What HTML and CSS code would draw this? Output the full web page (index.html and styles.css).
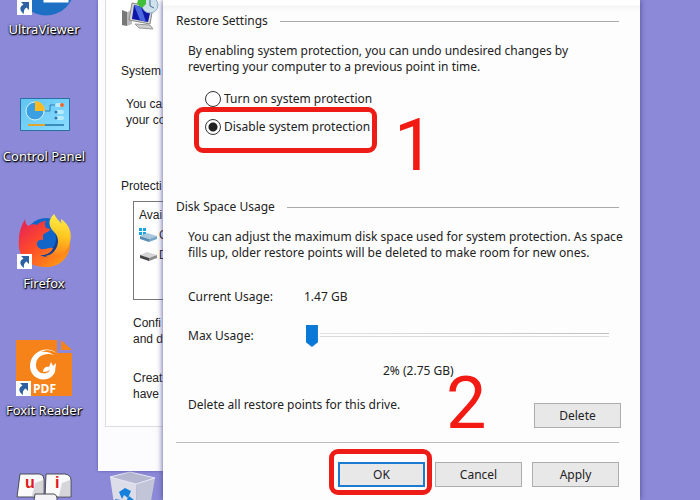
FILE: index.html
```html
<!DOCTYPE html>
<html lang="en">
<head>
<meta charset="utf-8">
<title>System Protection</title>
<link rel="stylesheet" href="styles.css">
</head>
<body>
<svg class="defs" aria-hidden="true">
  <symbol id="shortcut" viewBox="0 0 15 15">
    <path fill="#fff" d="M0 0h15v15H0z"/>
    <path fill="#2c62a4" d="M4 2h8v8l-2.500-2.500C7 9 6.500 11 7 14 2.500 11 2 7 6.500 4.500z"/>
  </symbol>
</svg>
<main class="desktop">
  <div class="shortcuts">
    <div class="shortcut">
      <svg class="glyph" viewBox="0 0 58 58">
        <circle cx="31" cy="29" r="28.500" fill="#1d6fc4"/>
        <path d="M30 30h22v13H30z" fill="none" stroke="#fff" stroke-width="3"/>
        <use href="#shortcut" x="2" y="42" width="15" height="15"/>
      </svg>
      <span>UltraViewer</span>
    </div>
    <div class="shortcut">
      <svg class="glyph" viewBox="0 0 58 58">
        <defs><linearGradient id="cp" x2="1" y2="1"><stop stop-color="#5fc4f2"/><stop offset="1" stop-color="#8bdcff"/></linearGradient></defs>
        <path fill="url(#cp)" stroke="#2a6fa0" d="M5.500 13.500h49v32h-49z"/>
        <circle cx="20" cy="26" r="9" fill="#3c9fe2" stroke="#d5f2ff"/>
        <path fill="#ffba1f" d="M20 26V16a10 10 0 0 1 10 10z"/>
        <path fill="none" stroke="#317fae" d="M30 26h5v-6h7"/>
        <g fill="#b9ebff"><rect x="40" y="18" width="9" height="4" rx="2"/><rect x="40" y="25" width="9" height="4" rx="2"/><rect x="40" y="31" width="9" height="4" rx="2"/></g>
        <circle cx="47" cy="20" r="2" fill="#e7662c"/>
        <circle cx="41" cy="27" r="1.500" fill="#2675a8"/><circle cx="41" cy="33" r="1.500" fill="#2675a8"/>
        <path stroke="#e0a52e" stroke-width="2" d="M13 40h17"/><path stroke="#3a8cba" stroke-width="2" d="M30 40h19"/>
      </svg>
      <span>Control Panel</span>
    </div>
    <div class="shortcut">
      <svg class="glyph" viewBox="0 0 58 58">
        <defs>
          <linearGradient id="fx" x1=".1" y1=".1" x2=".9" y2=".9"><stop stop-color="#e8284f"/><stop offset=".4" stop-color="#ff4a2b"/><stop offset="1" stop-color="#ff9a12"/></linearGradient>
          <linearGradient id="fy" x1=".5" y1="0" x2=".4" y2="1"><stop stop-color="#fff04a"/><stop offset=".5" stop-color="#ffc51f"/><stop offset="1" stop-color="#ff7a1c"/></linearGradient>
        </defs>
        <circle cx="31" cy="27" r="21" fill="#1265c8"/>
        <path fill="#123f91" d="M20 33c6 9 17 7 20-1s-1-15-4-17c12 4 15 17 9 25s-22 8-25-7z"/>
        <path fill="url(#fx)" d="M10 7c0 3 1 5 3 7 3-2 7-2 9-1 3-3 6-4 9-4-2 3-1 5 0 7l4 1c0 3-5 3-7 6v5c-5-1-8 3-5 7 4 5 10 0 15 1-1 4-7 8-13 7 8 5 21 1 23-9 3-8 1-15-3-19 9 5 12 16 9 24-4 12-15 17-25 16C10 54 2 42 4 27c0-8 3-14 6-20z"/>
        <path fill="url(#fy)" d="M39 2c-8 8-4 14 1 19 7 8 1 22-10 23 9 5 22-1 25-14 3-11-3-19-9-23 0 2 0 3 1 5-3-3-6-6-8-10z"/>
        <use href="#shortcut" x="2" y="42" width="15" height="15"/>
      </svg>
      <span>Firefox</span>
    </div>
    <div class="shortcut">
      <svg class="glyph" viewBox="0 0 58 58">
        <path fill="#f68319" d="M1 1h41v13h15v43H1z"/>
        <path fill="#f68319" d="M46 1l11 10H46z"/>
        <path fill="#fff" d="M42 14C31 6 16 13 15 26c-1 15 19 20 25 7l1-9-3 3-2-4-2 5c-3-1-6 1-6 5 3 0 5-1 7-2-3 6-14 4-14-5 0-9 9-13 18-10-4-3-9-4-13-3 5-3 11-2 16 1z"/>
        <use href="#shortcut" x="1" y="42" width="15" height="15"/>
        <text class="pdf" x="18" y="54">PDF</text>
      </svg>
      <span>Foxit Reader</span>
    </div>
    <div class="shortcut">
      <svg class="glyph" viewBox="0 0 58 58">
        <g stroke="#4a4a54"><path fill="#fafafa" d="M5 8h20q4 1 4 5v18H2z"/><path fill="#fafafa" d="M31 8h19q6 1 6 6v17H30z"/></g>
        <path fill="#d5d5da" d="M20 17l8-3v16H17zM47 17l8-3v16H44z"/>
        <path fill="#f4f4f6" stroke="#4a4a54" d="M20 28h19q3 1 3 4v16H17z"/>
        <text class="key" x="10" y="22">u</text><text class="key" x="40" y="22">i</text>
      </svg>
    </div>
    <div class="shortcut bin">
      <svg class="glyph" viewBox="0 0 58 58">
        <path fill="#b5b6cf" d="M7 11l20-5 25 6-18 6z"/>
        <path fill="#dcdde9" d="M7 11l26 7 1 40H14z"/>
        <path fill="#c2c4d8" d="M33 18l19-6-8 46H34z"/>
        <path fill="none" stroke="#e9eaf5" d="M7 11l20-5 25 6-19 6z"/>
        <g fill="#1580dc"><path d="M16 26l6-4 6 3-3 7-4-3-2 4z"/><path d="M12 33l6 1 1 8-5-3z"/><path d="M26 30l5 4-4 8-5-5z"/></g>
      </svg>
    </div>
  </div>

  <section class="window back">
    <div class="panel">
      <svg class="restore" viewBox="0 0 38 32">
        <path fill="#777" d="M1 10l5 2v14l-5-1z"/><path fill="#bbb" d="M6 12l5-2v14l-5 2z"/>
        <path fill="#d4d4d4" stroke="#888" d="M11 3l21 4-3 17-21-4z"/>
        <path fill="#0d16a8" d="M13 5l17 4-3 13-16-3z"/><path fill="#4b67dd" d="M13 5l7 2 5 15-6-2z"/>
        <path fill="#d0d0d0" stroke="#999" d="M14 24l15 1 3 4-14-1z"/>
        <circle cx="29" cy="5" r="8" fill="#cfe2ec" stroke="#8fb1c4"/><path fill="none" stroke="#47718c" d="M29 0v6l4 2"/>
        <path fill="#42bf38" d="M17 0h8v4l-4 4-5-4z"/>
      </svg>
      <p class="system">System</p>
      <p class="intro">You ca<br>your co</p>
      <p class="group">Protecti</p>
      <div class="drives">
        <p>Avai</p>
        <p><svg viewBox="0 0 18 16"><path fill="#13a5e8" d="M0 1h3v3H0zM4 1h3v3H4zM0 5h3v3H0zM4 5h3v3H4z"/><path fill="#a9c8dd" d="M1 9l7-3 10 3-8 3z"/><path fill="#5a8db4" d="M1 9l9 3v3l-9-3z"/><path fill="#7aa6c6" d="M10 12l8-3v3l-8 3z"/></svg>C</p>
        <p><svg viewBox="0 0 18 16"><path fill="#d5d5d5" d="M1 8l7-3 10 3-8 3z"/><path fill="#444" d="M1 8l9 3v3l-9-3z"/><path fill="#8b8b8b" d="M10 11l8-3v3l-8 3z"/></svg>D</p>
      </div>
      <p class="action">Confi<br>and d</p>
      <p class="action last">Creat<br>have</p>
    </div>
  </section>

  <form class="window front">
    <h2>Restore Settings</h2>
    <p class="text">By enabling system protection, you can undo undesired changes by<br>reverting your computer to a previous point in time.</p>
    <div class="choices">
      <label><input type="radio" name="protection">Turn on system protection</label>
      <label class="marked"><input type="radio" name="protection" checked>Disable system protection</label>
      <span class="step one">1</span>
    </div>
    <h2>Disk Space Usage</h2>
    <p class="text">You can adjust the maximum disk space used for system protection. As space<br>fills up, older restore points will be deleted to make room for new ones.</p>
    <div class="usage">
      <span>Current Usage:</span><span class="amount">1.47 GB</span>
      <label for="max">Max Usage:</label><input id="max" type="range" min="0" max="100" value="2">
    </div>
    <p class="value">2% (2.75 GB)<span class="step two">2</span></p>
    <div class="remove">
      <span>Delete all restore points for this drive.</span>
      <button type="button">Delete</button>
    </div>
    <div class="actions">
      <span class="marked"><button type="button" class="default">OK</button></span>
      <button type="button">Cancel</button>
      <button type="button">Apply</button>
    </div>
  </form>
</main>
</body>
</html>
```

FILE: styles.css
```css
* { box-sizing: border-box; }
body { margin: 0; font: 12px/16px "Noto Sans", sans-serif; color: #222; }
p, h2 { margin: 0; font-size: inherit; font-weight: normal; }
.defs { position: absolute; width: 0; height: 0; }
.desktop { position: relative; height: 100vh; overflow: hidden; background: #8c8ad8; }

.shortcuts {
  display: grid;
  grid-template: repeat(5, 80px) / 88px 88px;
  grid-auto-flow: column;
  row-gap: 47px;
  margin-top: -42px;
}
.shortcut { display: flex; flex-direction: column; align-items: center; gap: 4px; }
.shortcut span {
  font-size: 13px;
  line-height: 18px;
  white-space: nowrap;
  color: #fff;
  text-shadow: 1px 1px 1px #000, 0 1px 2px #112, 0 0 2px #112;
}
.glyph { width: 58px; height: 58px; flex: none; }
.bin { grid-area: 5 / 2; }
.pdf { font: bold 12px "Open Sans", sans-serif; fill: #fff; }
.key { font: bold 16px "Liberation Sans", sans-serif; fill: #e01820; }

.window { position: absolute; background: #fff; }
.back {
  left: 98px;
  right: 80px;
  top: 0;
  padding: 0 7px 44px;
  font-family: "Liberation Sans", sans-serif;
  background: #fcfcfe;
  box-shadow: 0 0 3px #5f5ca8;
}
.panel {
  padding: 0 15px 24px;
  background: #fff;
  border: solid #dcdcdc;
  border-width: 0 1px 1px;
}
.restore { display: block; width: 38px; height: 32px; }
.system { margin-top: 31px; }
.intro { margin: 17px 0 0 5px; }
.group { margin-top: 50px; }
.drives { margin: 7px 0 0 12px; height: 99px; padding: 3px 5px; border: 1px solid #777; }
.drives p { display: flex; align-items: center; gap: 2px; height: 20px; }
.drives svg { width: 18px; height: 16px; }
.action { margin: 15px 0 0 12px; }
.last { margin-top: 23px; }

.front {
  left: 163px;
  right: 60px;
  top: 0;
  min-height: 100%;
  padding: 12px 21px 13px 13px;
  background: linear-gradient(#fff 5px, #f5f5f5 6px, #fdfdfd 12px);
  box-shadow: 0 0 6px #4b4794;
}
h2 { display: flex; align-items: center; gap: 12px; line-height: 18px; }
h2::after { content: ""; flex: 1; border-top: 1px solid #aaa; }
.text { margin: 13px 0 0 12px; white-space: nowrap; }

.choices {
  position: relative;
  display: flex;
  flex-direction: column;
  align-items: flex-start;
  gap: 8px;
  margin: 14px 0 61px 29px;
}
.choices label { display: flex; align-items: center; gap: 3px; height: 20px; }
input[type="radio"] {
  appearance: none;
  width: 16px;
  height: 16px;
  margin: 0;
  border: 1px solid #333;
  border-radius: 50%;
}
input[type="radio"]:checked { background: radial-gradient(circle, #222 4px, transparent 5px); }

.marked { position: relative; }
.marked::after {
  content: "";
  position: absolute;
  inset: -10px -7px -16px -11px;
  border: 5px solid #ee1c16;
  border-radius: 9px;
  pointer-events: none;
}
.step { position: absolute; font: 72px/72px Roboto, sans-serif; color: #f41a14; }
.one { left: 189px; top: 21px; }
.two { left: 270px; top: 7px; }

.usage {
  display: grid;
  grid-template-columns: 112px 1fr;
  row-gap: 19px;
  line-height: 20px;
  margin: 26px 10px 15px 12px;
}
.amount { padding-left: 4px; }
input[type="range"] {
  appearance: none;
  height: 20px;
  margin: 0;
  background: linear-gradient(90deg, #e4e4e4, #c0c0c0) 100% 7px / calc(100% - 20px) 1px no-repeat,
    linear-gradient(#dcdcdc, #dcdcdc) 100% 10px / calc(100% - 20px) 1px no-repeat;
}
input[type="range"]::-webkit-slider-thumb {
  appearance: none;
  width: 12px;
  height: 22px;
  background: #0a78d6;
  clip-path: polygon(0 0, 100% 0, 100% 78%, 50% 100%, 0 78%);
}
.value { position: relative; padding-left: 207px; line-height: 20px; }
.remove {
  display: flex;
  justify-content: space-between;
  align-items: flex-start;
  margin: 14px -2px 14px 12px;
  line-height: 20px;
}
.remove button { margin-top: 8px; }
.actions {
  display: flex;
  justify-content: flex-end;
  gap: 10px;
  padding-top: 19px;
  border-top: 1px solid #bbb;
}
.actions .marked::after { inset: -13px -7px -8px -9px; }
button {
  display: block;
  width: 87px;
  height: 25px;
  padding: 0;
  font: inherit;
  line-height: 20px;
  color: #222;
  background: #e8e8e8;
  border: 1px solid #adadad;
}
.default { border: 2px solid #1a7bd0; }
```
